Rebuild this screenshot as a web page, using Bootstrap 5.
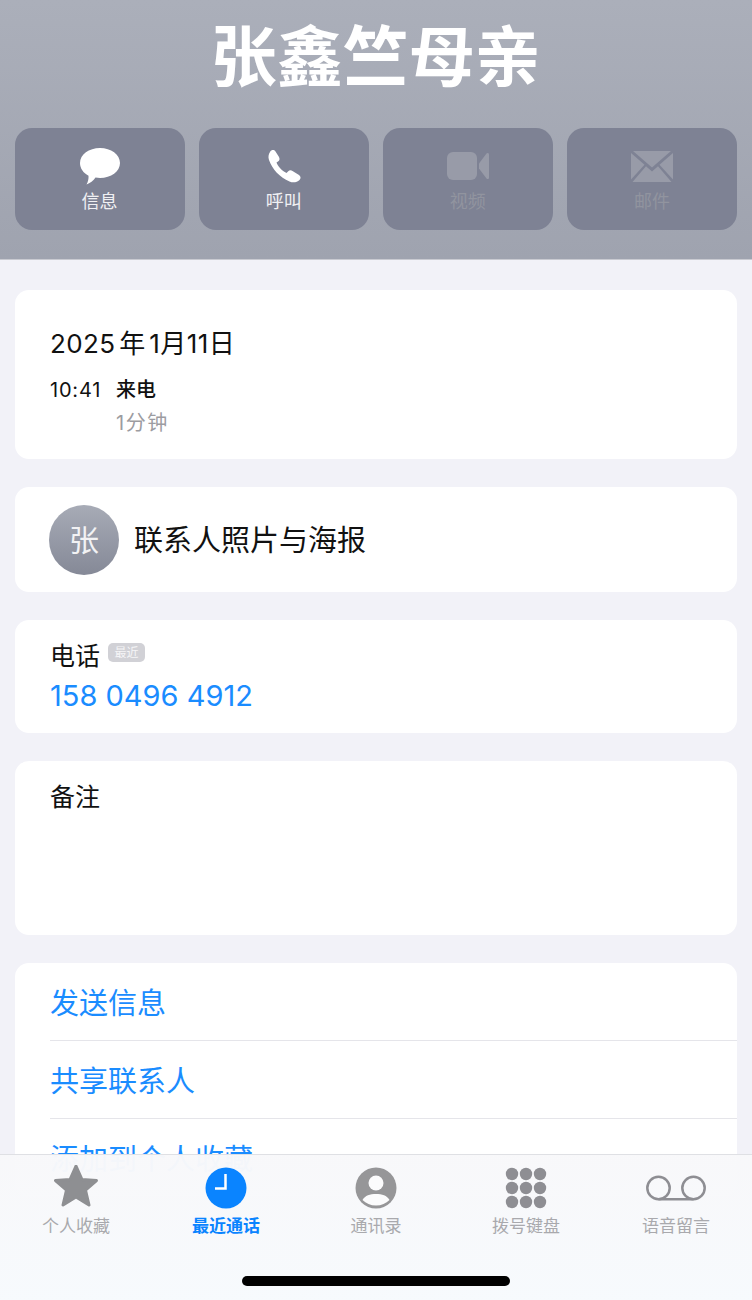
<!DOCTYPE html>
<html lang="zh-CN">
<head>
  <meta charset="UTF-8">
  <title>联系人</title>
  <link href="https://cdn.jsdelivr.net/npm/bootstrap@5.3.0/dist/css/bootstrap.min.css" rel="stylesheet">
  <style>
    html, body {
      height: 1300px;
      overflow: hidden;
    }
    body {
      margin: 0;
      background-color: #f2f2f8;
      font-family: Inter, "Noto Sans CJK SC", sans-serif;
      color: #111;
      position: relative;
    }

    .contact-head {
      height: 260px;
      padding: 20px 15px 0 14.5px;
      background: linear-gradient(#abafba, #9fa3af);
      border-bottom: 1px solid #c9cad1;
    }
    .contact-name {
      height: 74px;
      margin-bottom: 34px;
      font-size: 66px;
      line-height: 74px;
      font-weight: 700;
      color: #fff;
    }
    .action-row {
      gap: 14px;
    }
    .action-tile {
      flex: 1 1 0;
      height: 102px;
      padding-top: 19px;
      border-radius: 17px;
      background-color: #7e8294;
      color: #f0f0f3;
      font-size: 18px;
      line-height: 22px;
    }
    .action-tile.is-off {
      color: #91949f;
    }
    .action-tile.is-off svg {
      color: #989ba8;
    }
    .action-tile svg {
      color: #fff;
    }
    .action-icon {
      height: 38px;
      margin-bottom: 6px;
    }

    .sheet-list {
      padding: 30px 15px 0 15px;
    }
    .sheet-card {
      background-color: #fff;
      border-radius: 14px;
      margin-bottom: 28px;
    }
    .card-call {
      height: 169px;
      padding: 37px 35px 0;
    }
    .call-date {
      font-size: 26px;
      line-height: 34px;
      letter-spacing: 0.4px;
      word-spacing: -4px;
      margin-bottom: 16px;
    }
    .call-time {
      width: 66px;
      font-size: 20px;
      line-height: 26px;
      letter-spacing: 0.8px;
    }
    .call-kind {
      font-size: 20px;
      line-height: 26px;
      font-weight: 500;
    }
    .call-length {
      font-size: 20px;
      line-height: 26px;
      letter-spacing: 1.5px;
      margin-top: 7px;
      color: #9c9ca1;
    }
    .card-poster {
      height: 105px;
      padding-left: 34px;
      gap: 15px;
      font-size: 29px;
    }
    .poster-title {
      padding-top: 3px;
    }
    .avatar-disc {
      width: 70px;
      height: 70px;
      padding-top: 2px;
      border-radius: 50%;
      background: linear-gradient(#a7abb6, #858997);
      color: #f2f2f4;
      font-size: 30px;
    }
    .card-phone {
      height: 113px;
      padding: 19px 35px 0;
    }
    .phone-label {
      font-size: 25px;
      line-height: 34px;
      margin-bottom: 4px;
    }
    .recent-tag {
      width: 37px;
      height: 19px;
      margin-top: 4px;
      border-radius: 5px;
      background-color: #d1d1d6;
      color: #f5f5f7;
      font-size: 12px;
      line-height: 19px;
    }
    .phone-number {
      font-size: 29px;
      line-height: 38px;
      color: #1a8cff;
    }
    .card-note {
      height: 174px;
      padding: 19px 35px 0;
      font-size: 25px;
      line-height: 34px;
    }
    .card-actions {
      padding-left: 35px;
      font-size: 29px;
      color: #1a8cff;
    }
    .sheet-link {
      height: 78px;
      padding-top: 4px;
      line-height: 73px;
      border-bottom: 1px solid #e5e5ea;
    }

    .tab-strip {
      position: absolute;
      left: 0;
      right: 0;
      bottom: 0;
      height: 146px;
      padding-top: 8px;
      background: linear-gradient(rgba(248, 248, 250, 0.98), rgba(247, 250, 253, 0.98));
      border-top: 1px solid #dfe0e4;
    }
    .tab-cell {
      width: 150px;
      font-size: 17px;
      line-height: 22px;
      color: #a9a9ad;
    }
    .tab-cell.is-current {
      color: #0a84ff;
      font-weight: 700;
    }
    .tab-icon {
      height: 50px;
      margin-bottom: 2px;
    }
    .home-bar {
      position: absolute;
      left: 242px;
      top: 121px;
      width: 268px;
      height: 10px;
      border-radius: 5px;
      background-color: #000;
    }
  </style>
</head>
<body>
  <header class="contact-head">
    <div class="contact-name text-center">张鑫竺母亲</div>
    <div class="action-row d-flex">
      <div class="action-tile text-center">
        <div class="action-icon d-flex justify-content-center align-items-center">
          <svg width="40" height="37" viewBox="0 0 40 37"><path fill="currentColor" d="M20 0C31 0 40 6.600 40 15C40 23.400 31 30 20 30C18.500 30 17 29.900 15.500 29.600C13.500 32.600 10 35.600 6.500 36.500C8 34 8.800 30.800 8.500 27.700C3.300 25 0 20.300 0 15C0 6.600 9 0 20 0Z"/></svg>
        </div>
        信息
      </div>
      <div class="action-tile text-center">
        <div class="action-icon d-flex justify-content-center align-items-center">
          <svg width="34" height="34" viewBox="0 0 34 34"><path fill="currentColor" d="M3 3C4.500 0.500 7 0.500 8.500 2.500L12 8C13 10 12.500 11.500 11 12.500L9.500 13.500C10.500 17 15 22 19.500 24L21 22.500C22.500 21 24 21 25.500 22L32 26C34 27.500 34 29.500 32.500 31C30 33.500 26 34 22.500 32.500C13 28.500 5 20 2 11C1 8 1.500 5 3 3Z"/></svg>
        </div>
        呼叫
      </div>
      <div class="action-tile is-off text-center">
        <div class="action-icon d-flex justify-content-center align-items-center">
          <svg width="42" height="28" viewBox="0 0 42 28"><rect fill="currentColor" width="30" height="28" rx="6"/><path fill="currentColor" d="M32 11.500L39.500 1.500C40.500 0.300 42 1 42 2.500V25.500C42 27 40.500 27.700 39.500 26.500L32 16.500Z"/></svg>
        </div>
        视频
      </div>
      <div class="action-tile is-off text-center">
        <div class="action-icon d-flex justify-content-center align-items-center">
          <svg width="42" height="31" viewBox="0 0 42 31"><g fill="currentColor"><path d="M2 0H40L21 16.500Z"/><path d="M0 2V28.500L13.500 13.800Z"/><path d="M42 2V28.500L28.500 13.800Z"/><path d="M15 15.300L21 20.500L27 15.300L40.500 31H1.500Z"/></g></svg>
        </div>
        邮件
      </div>
    </div>
  </header>

  <main class="sheet-list">
    <section class="sheet-card card-call">
      <div class="call-date">2025 年 1月11日</div>
      <div class="d-flex">
        <div class="call-time">10:41</div>
        <div>
          <div class="call-kind">来电</div>
          <div class="call-length">1分钟</div>
        </div>
      </div>
    </section>

    <section class="sheet-card card-poster d-flex align-items-center">
      <div class="avatar-disc d-flex justify-content-center align-items-center">张</div>
      <div class="poster-title">联系人照片与海报</div>
    </section>

    <section class="sheet-card card-phone">
      <div class="d-flex gap-2">
        <div class="phone-label">电话</div>
        <div class="recent-tag text-center">最近</div>
      </div>
      <div class="phone-number">158 0496 4912</div>
    </section>

    <section class="sheet-card card-note">备注</section>

    <section class="sheet-card card-actions">
      <div class="sheet-link">发送信息</div>
      <div class="sheet-link">共享联系人</div>
      <div class="sheet-link">添加到个人收藏</div>
    </section>
  </main>

  <nav class="tab-strip d-flex justify-content-center">
    <div class="tab-cell text-center">
      <div class="tab-icon d-flex justify-content-center align-items-center">
        <svg width="46" height="46" viewBox="0 2 46 46"><path fill="#8e8f92" stroke="#8e8f92" stroke-width="3" stroke-linejoin="round" d="M23 3L29 16.500L43.500 17.500L32.500 27L36 42L23 34L10 42L13.500 27L2.500 17.500L17 16.500Z"/></svg>
      </div>
      个人收藏
    </div>
    <div class="tab-cell is-current text-center">
      <div class="tab-icon d-flex justify-content-center align-items-center">
        <svg width="42" height="42" viewBox="0 0 42 42"><circle cx="21" cy="21" r="20.500" fill="#0a84ff"/><path fill="none" stroke="#fff" stroke-width="2.500" d="M20.500 7V21.500H10"/></svg>
      </div>
      最近通话
    </div>
    <div class="tab-cell text-center">
      <div class="tab-icon d-flex justify-content-center align-items-center">
        <svg width="42" height="42" viewBox="0 0 42 42"><circle cx="21" cy="21" r="20.500" fill="#969698"/><circle cx="21" cy="16" r="7.500" fill="#fbfbfc"/><path fill="#fbfbfc" d="M7.500 33C10 28.500 15 27 21 27C27 27 32 28.500 34.500 33C31 36.500 26.500 38.500 21 38.500C15.500 38.500 11 36.500 7.500 33Z"/></svg>
      </div>
      通讯录
    </div>
    <div class="tab-cell text-center">
      <div class="tab-icon d-flex justify-content-center align-items-center">
        <svg width="42" height="42" viewBox="0 0 42 42"><g fill="#8e8e93"><circle cx="7" cy="7" r="6.200"/><circle cx="21" cy="7" r="6.200"/><circle cx="35" cy="7" r="6.200"/><circle cx="7" cy="21" r="6.200"/><circle cx="21" cy="21" r="6.200"/><circle cx="35" cy="21" r="6.200"/><circle cx="7" cy="35" r="6.200"/><circle cx="21" cy="35" r="6.200"/><circle cx="35" cy="35" r="6.200"/></g></svg>
      </div>
      拨号键盘
    </div>
    <div class="tab-cell text-center">
      <div class="tab-icon d-flex justify-content-center align-items-center">
        <svg width="60" height="26" viewBox="0 0 60 26"><g fill="none" stroke="#8e8e93" stroke-width="2.500"><circle cx="12.500" cy="13" r="11.200"/><circle cx="47.500" cy="13" r="11.200"/><path d="M12.500 24.200H47.500"/></g></svg>
      </div>
      语音留言
    </div>
    <div class="home-bar"></div>
  </nav>

  <script src="https://cdn.jsdelivr.net/npm/bootstrap@5.3.0/dist/js/bootstrap.bundle.min.js"></script>
</body>
</html>
